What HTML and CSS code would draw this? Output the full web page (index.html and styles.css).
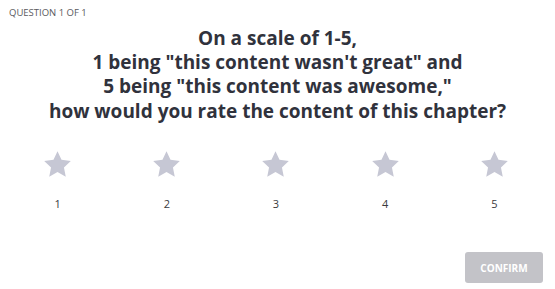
FILE: index.html
```html
<!DOCTYPE html>
<html>
<head>
<meta charset="utf-8">
<link rel="stylesheet" href="styles.css">
</head>
<body>
<div class="page">
  <div class="label">QUESTION 1 OF 1</div>
  <h1 class="title">On a scale of 1-5,<br>1 being "this content wasn't great" and<br>5 being "this content was awesome,"<br>how would you rate the content of this chapter?</h1>
  <div class="rating">
    <div class="option"><svg class="star" viewBox="0 0 24 24"><path d="M12 1.8l3.1 6.6 7.2.9-5.3 5 1.4 7.1L12 17.9l-6.4 3.5L7 14.3 1.7 9.3l7.2-.9z"/></svg><span class="num">1</span></div>
    <div class="option"><svg class="star" viewBox="0 0 24 24"><path d="M12 1.8l3.1 6.6 7.2.9-5.3 5 1.4 7.1L12 17.9l-6.4 3.5L7 14.3 1.7 9.3l7.2-.9z"/></svg><span class="num">2</span></div>
    <div class="option"><svg class="star" viewBox="0 0 24 24"><path d="M12 1.8l3.1 6.6 7.2.9-5.3 5 1.4 7.1L12 17.9l-6.4 3.5L7 14.3 1.7 9.3l7.2-.9z"/></svg><span class="num">3</span></div>
    <div class="option"><svg class="star" viewBox="0 0 24 24"><path d="M12 1.8l3.1 6.6 7.2.9-5.3 5 1.4 7.1L12 17.9l-6.4 3.5L7 14.3 1.7 9.3l7.2-.9z"/></svg><span class="num">4</span></div>
    <div class="option"><svg class="star" viewBox="0 0 24 24"><path d="M12 1.8l3.1 6.6 7.2.9-5.3 5 1.4 7.1L12 17.9l-6.4 3.5L7 14.3 1.7 9.3l7.2-.9z"/></svg><span class="num">5</span></div>
  </div>
  <div class="actions"><button class="confirm" disabled>CONFIRM</button></div>
</div>
</body>
</html>
```
FILE: styles.css
```css
html, body {
  margin: 0;
  padding: 0;
  background: #ffffff;
}
body {
  font-family: "Open Sans", "Noto Sans", sans-serif;
  color: #33353f;
}
.page {
  width: 555px;
  height: 289px;
  box-sizing: border-box;
  padding: 7px 0 0;
  display: flex;
  flex-direction: column;
}
.label {
  font-size: 9.5px;
  line-height: 11px;
  color: #5a5a5e;
  padding-left: 9px;
}
.title {
  margin: 8px 0 0;
  font-size: 19px;
  line-height: 24.2px;
  font-weight: 700;
  text-align: center;
  color: #30323c;
}
.rating {
  margin-top: 26px;
  display: grid;
  grid-template-columns: repeat(5, 1fr);
  padding: 0 6px 0 3px;
}
.option {
  display: flex;
  flex-direction: column;
  align-items: center;
}
.star {
  width: 31px;
  height: 31px;
  fill: #c6c7d4;
}
.num {
  margin-top: 16px;
  font-size: 11px;
  line-height: 15px;
  color: #3a3a3e;
}
.actions {
  margin-top: auto;
  display: flex;
  justify-content: flex-end;
  padding: 0 12px 6px 0;
}
.confirm {
  width: 78px;
  height: 31px;
  border: none;
  border-radius: 3px;
  background: #c3c3c8;
  color: #ffffff;
  font-family: "Open Sans", "Noto Sans", sans-serif;
  font-size: 10px;
  font-weight: 700;
  padding: 0;
}
```
